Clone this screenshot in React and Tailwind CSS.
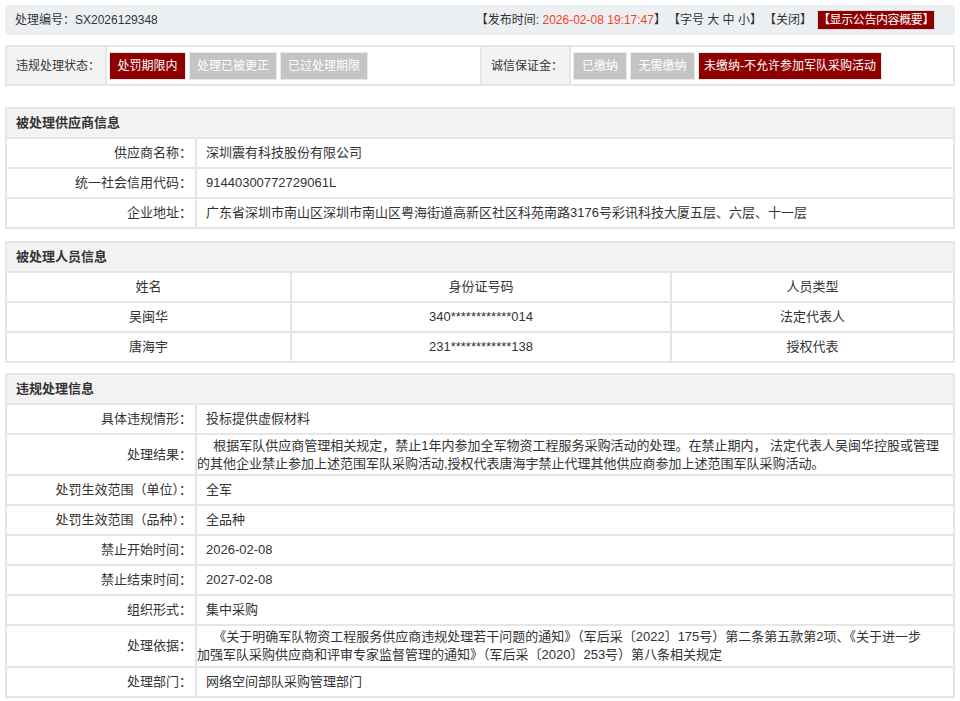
import React from "react";

const font = { fontFamily: '"Liberation Sans", "Noto Sans CJK SC", sans-serif' };

function Btn({ children, active, w }) {
  return (
    <div
      className={`h-[28px] flex items-center justify-center whitespace-nowrap text-[12px] text-white border border-[#e9e9e9] ${
        active ? "bg-[#8e0000]" : "bg-[#c4c4c4]"
      } ${w}`}
    >
      {children}
    </div>
  );
}

function Section({ title, children, className = "" }) {
  return (
    <div className={`mx-[5px] border-2 border-[#e6e6e6] ${className}`}>
      <div className="h-[28px] bg-[#f3f3f3] flex items-center pl-[9px] text-[13px] font-semibold text-[#333]">
        {title}
      </div>
      {children}
    </div>
  );
}

function Row({ label, children, h = "h-[30px]" }) {
  return (
    <div className={`flex border-t-2 border-[#e6e6e6] ${h}`}>
      <div className="w-[190px] shrink-0 border-r-2 border-[#e6e6e6] flex items-center justify-end pr-[3px] whitespace-nowrap text-[13px] text-[#333]">
        {label}
      </div>
      <div className="flex-1 flex items-center pl-[9px] text-[13px] text-[#333] leading-[18px]">
        {children}
      </div>
    </div>
  );
}

function PRow({ a, b, c }) {
  return (
    <div className="flex border-t-2 border-[#e6e6e6] h-[30px] text-[13px] text-[#333]">
      <div className="w-[285px] shrink-0 border-r-2 border-[#e6e6e6] flex items-center justify-center">{a}</div>
      <div className="w-[380px] shrink-0 border-r-2 border-[#e6e6e6] flex items-center justify-center">{b}</div>
      <div className="flex-1 flex items-center justify-center">{c}</div>
    </div>
  );
}

export default function App() {
  return (
    <div className="w-[960px] h-[701px] bg-white overflow-hidden pt-[5px]" style={font}>
      {/* top bar */}
      <div className="mx-[5px] h-[30px] bg-[#edf0f3] flex items-center justify-between pl-[10px] pr-[20px] text-[12px] text-[#333] whitespace-nowrap">
        <div>处理编号：SX2026129348</div>
        <div className="flex items-center">
          <span>
            【发布时间: <span className="text-[#f4421f]">2026-02-08 19:17:47</span>】
          </span>
          <span className="ml-[2px]">【字号 大 中 小】</span>
          <span className="ml-[2px]">【关闭】</span>
          <span className="ml-[5px] bg-[#8e0000] text-white h-[20px] flex items-center border border-[#d9d9d9] tracking-[-0.4px]">
            【显示公告内容概要】
          </span>
        </div>
      </div>

      {/* status row */}
      <div className="mx-[5px] mt-[10px] h-[41px] border-2 border-[#e6e6e6] flex text-[12px] text-[#333] whitespace-nowrap">
        <div className="w-[100px] shrink-0 bg-[#f3f3f3] border-r-2 border-[#e6e6e6] flex items-center pl-[9px]">
          违规处理状态：
        </div>
        <div className="w-[375px] shrink-0 border-r-2 border-[#e6e6e6] flex items-center gap-[3px] pl-[2px]">
          <Btn active w="w-[77px]">处罚期限内</Btn>
          <Btn w="w-[88px]">处理已被更正</Btn>
          <Btn w="w-[88px]">已过处理期限</Btn>
        </div>
        <div className="w-[89px] shrink-0 bg-[#f3f3f3] border-r-2 border-[#e6e6e6] flex items-center pl-[9px]">
          诚信保证金：
        </div>
        <div className="flex-1 flex items-center gap-[3px] pl-[2px]">
          <Btn w="w-[54px]">已缴纳</Btn>
          <Btn w="w-[65px]">无需缴纳</Btn>
          <Btn active w="w-[184px]">未缴纳-不允许参加军队采购活动</Btn>
        </div>
      </div>

      <Section title="被处理供应商信息" className="mt-[21px]">
        <Row label="供应商名称：">深圳震有科技股份有限公司</Row>
        <Row label="统一社会信用代码：">91440300772729061L</Row>
        <Row label="企业地址：">广东省深圳市南山区深圳市南山区粤海街道高新区社区科苑南路3176号彩讯科技大厦五层、六层、十一层</Row>
      </Section>

      <Section title="被处理人员信息" className="mt-[12px]">
        <PRow a="姓名" b="身份证号码" c="人员类型" />
        <PRow a="吴闽华" b="340************014" c="法定代表人" />
        <PRow a="唐海宇" b="231************138" c="授权代表" />
      </Section>

      <Section title="违规处理信息" className="mt-[10px]">
        <Row label="具体违规情形：">投标提供虚假材料</Row>
        <Row label="处理结果：" h="h-[41px]">
          <div>
            <div className="whitespace-pre">  根据军队供应商管理相关规定，禁止1年内参加全军物资工程服务采购活动的处理。在禁止期内， 法定代表人吴闽华控股或管理</div>
            <div className="-ml-[9px]">的其他企业禁止参加上述范围军队采购活动,授权代表唐海宇禁止代理其他供应商参加上述范围军队采购活动。</div>
          </div>
        </Row>
        <Row label="处罚生效范围（单位）：">全军</Row>
        <Row label="处罚生效范围（品种）：">全品种</Row>
        <Row label="禁止开始时间：">2026-02-08</Row>
        <Row label="禁止结束时间：">2027-02-08</Row>
        <Row label="组织形式：">集中采购</Row>
        <Row label="处理依据：" h="h-[42px]">
          <div>
            <div className="whitespace-pre">  《关于明确军队物资工程服务供应商违规处理若干问题的通知》（军后采〔2022〕175号）第二条第五款第2项、《关于进一步</div>
            <div className="-ml-[9px]">加强军队采购供应商和评审专家监督管理的通知》（军后采〔2020〕253号）第八条相关规定</div>
          </div>
        </Row>
        <Row label="处理部门：">网络空间部队采购管理部门</Row>
      </Section>
    </div>
  );
}
